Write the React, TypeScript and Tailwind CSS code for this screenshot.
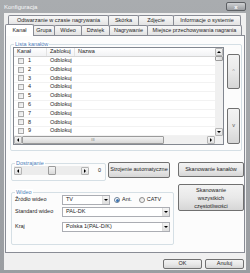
import React from 'react'

const tabBase =
  'flex items-center justify-center border border-b-0 border-[#898c95] rounded-t-[2px] whitespace-nowrap'

function Tab({ w, label, selected }: { w: string; label: string; selected?: boolean }) {
  if (selected) {
    return (
      <div className={`${tabBase} ${w} h-[12px] -mb-[1px] relative z-10 bg-white`}>{label}</div>
    )
  }
  return (
    <div className={`${tabBase} ${w} h-[10px] -ml-[1px] bg-gradient-to-b from-[#f8f8f8] to-[#e3e3e3]`}>
      {label}
    </div>
  )
}

function Btn({ className, children }: { className: string; children: React.ReactNode }) {
  return (
    <div
      className={`${className} flex items-center justify-center text-center border border-[#707070] rounded-[2px] bg-gradient-to-b from-[#f3f3f3] via-[#e9e9e9] to-[#d6d6d6] shrink-0`}
    >
      {children}
    </div>
  )
}

function Combo({ w, value }: { w: string; value: string }) {
  return (
    <div className={`${w} h-[10px] flex border border-[#abadb3] bg-white shrink-0`}>
      <span className="flex-1 pl-[3px] flex items-center">{value}</span>
      <div className="w-[7px] border-l border-[#dcdcdc] bg-gradient-to-b from-[#f4f4f4] to-[#dedede] flex items-center justify-center">
        <div className="w-0 h-0 border-x-[2px] border-x-transparent border-t-[2px] border-t-black" />
      </div>
    </div>
  )
}

function GroupLabel({ text }: { text: string }) {
  return (
    <div className="h-0 flex">
      <span className="-mt-[4px] ml-[3px] px-[1px] bg-white h-[7px] leading-[7px] text-[#4f7fb9]">{text}</span>
    </div>
  )
}

function Arrow({ dir }: { dir: 'up' | 'down' | 'left' | 'right' }) {
  const cls =
    dir === 'up'
      ? 'border-x-[2px] border-x-transparent border-b-[2px] border-b-black'
      : dir === 'down'
        ? 'border-x-[2px] border-x-transparent border-t-[2px] border-t-black'
        : dir === 'left'
          ? 'border-y-[2px] border-y-transparent border-r-[2px] border-r-black'
          : 'border-y-[2px] border-y-transparent border-l-[2px] border-l-black'
  return (
    <div className="w-[8px] h-[8px] border border-[#b5b5b5] rounded-[1px] bg-gradient-to-b from-[#f5f5f5] to-[#e0e0e0] flex items-center justify-center shrink-0">
      <div className={`w-0 h-0 ${cls}`} />
    </div>
  )
}

const rows = [1, 2, 3, 4, 5, 6, 7, 8, 9]

export default function App() {
  return (
    <div className="w-[250px] h-[273px] flex flex-col bg-gradient-to-b from-[#a9acaf] to-[#9a9da1] font-['Liberation_Sans',sans-serif] text-[5.5px] leading-none text-[#1e1e1e] overflow-hidden">
      {/* Title bar */}
      <div className="h-[13px] flex items-center justify-between px-[4px] shrink-0">
        <span className="text-[6px] text-[#f7f7f7]">Konfiguracja</span>
        <div className="w-[20px] h-[9px] rounded-[2px] border border-[#5d6064] bg-gradient-to-b from-[#cfd1d3] to-[#9b9ea2] flex items-center justify-center text-white text-[6px] font-bold">
          x
        </div>
      </div>

      <div className="flex-1 mx-[4px] mb-[3px] bg-[#f0f0f0] flex flex-col">
        {/* Tabs back row */}
        <div className="mt-[2px] h-[10px] pl-[5px] flex shrink-0">
          <Tab w="w-[101px]" label="Odtwarzanie w czasie nagrywania" />
          <Tab w="w-[31px]" label="Skórka" />
          <Tab w="w-[36px]" label="Zdjęcie" />
          <Tab w="w-[68px]" label="Informacje o systemie" />
        </div>
        {/* Tabs front row */}
        <div className="h-[10px] pl-[1px] flex items-end shrink-0">
          <Tab w="w-[29px]" label="Kanał" selected />
          <Tab w="w-[22px]" label="Grupa" />
          <Tab w="w-[28px]" label="Wideo" />
          <Tab w="w-[29px]" label="Dźwięk" />
          <Tab w="w-[39px]" label="Nagrywanie" />
          <Tab w="w-[95px]" label="Miejsce przechowywania nagrania" />
        </div>

        {/* Panel */}
        <div className="ml-[1px] w-[240px] h-[218px] border border-[#898c95] bg-[#fcfcfc] flex flex-col shrink-0">
          {/* Lista kanałów */}
          <div className="mt-[8px] pl-[4px] flex">
            <div className="w-[232px] h-[107px] border border-[#d5dfe5] rounded-[2px] flex flex-col">
              <GroupLabel text="Lista kanałów" />
              <div className="pt-[2px] pl-[2px] flex">
                <div className="w-[211px] h-[98px] border border-[#828790] bg-white flex flex-col">
                  <div className="h-[88px] flex">
                    <div className="w-[201px] flex flex-col">
                      <div className="h-[9px] flex bg-gradient-to-b from-white to-[#f1f2f4] border-b border-[#d5d5d5]">
                        <div className="w-[33px] border-r border-[#e3e3e3] pl-[3px] flex items-center">Kanał</div>
                        <div className="w-[28px] border-r border-[#e3e3e3] pl-[3px] flex items-center">Zablokuj</div>
                        <div className="flex-1 pl-[3px] flex items-center">Nazwa</div>
                      </div>
                      {rows.map((n) => (
                        <div key={n} className="h-[8.8px] flex items-center border-b border-[#f2f2f2]">
                          <div className="w-[33px] flex items-center">
                            <div className="ml-[4px] w-[6px] h-[6px] border border-[#a9a9a9] bg-gradient-to-br from-[#e2e2e2] to-[#fafafa]" />
                            <span className="ml-[4px]">{n}</span>
                          </div>
                          <div className="w-[28px] pl-[3px]">Odblokuj</div>
                        </div>
                      ))}
                    </div>
                    <div className="w-[8px] bg-[#f0f0f0] flex flex-col">
                      <Arrow dir="up" />
                      <div className="h-[5px] border border-[#9b9b9b] rounded-[1px] bg-gradient-to-r from-[#f2f2f2] to-[#d9d9d9]" />
                      <div className="flex-1" />
                      <Arrow dir="down" />
                    </div>
                  </div>
                  <div className="h-[8px] flex bg-[#f0f0f0]">
                    <Arrow dir="left" />
                    <div className="w-[142px] border border-[#9b9b9b] rounded-[1px] bg-gradient-to-b from-[#f2f2f2] to-[#d9d9d9] flex items-center justify-center text-[4px] text-[#777]">
                      III
                    </div>
                    <div className="flex-1" />
                    <Arrow dir="right" />
                    <div className="w-[8px]" />
                  </div>
                </div>
                <div className="ml-[3px] mt-[7px] w-[13px] flex flex-col">
                  <Btn className="h-[35px] w-[13px] text-[#9a9a9a]">^</Btn>
                  <div className="h-[19px]" />
                  <Btn className="h-[36px] w-[13px] text-[#555]">v</Btn>
                </div>
              </div>
            </div>
          </div>

          {/* Dostrajanie row */}
          <div className="mt-[11px] pl-[5px] flex items-start">
            <div className="mt-[1px] w-[95px] h-[18px] border border-[#d5dfe5] rounded-[2px] flex flex-col">
              <GroupLabel text="Dostrajanie" />
              <div className="pt-[2px] pl-[2px] flex items-center">
                <div className="w-[75px] h-[9px] flex items-center bg-[#ececec]">
                  <Arrow dir="left" />
                  <div className="ml-[26px] w-[8px] h-[9px] border border-[#9b9b9b] rounded-[1px] bg-gradient-to-b from-[#f4f4f4] to-[#d9d9d9]" />
                  <div className="flex-1" />
                  <Arrow dir="right" />
                </div>
                <span className="ml-[9px]">0</span>
              </div>
            </div>
            <Btn className="ml-[2px] w-[62px] h-[16px] whitespace-nowrap">Strojenie automatyczne</Btn>
            <Btn className="ml-[8px] w-[66px] h-[15px]">Skanowanie kanałów</Btn>
          </div>

          {/* Wideo row */}
          <div className="mt-[3px] pl-[5px] flex items-start">
            <div className="mt-[8px] w-[163px] h-[53px] border border-[#d5dfe5] rounded-[2px] flex flex-col">
              <GroupLabel text="Wideo" />
              <div className="pt-[2px] pl-[3px] flex items-center">
                <span className="w-[47px]">Źródło wideo</span>
                <Combo w="w-[48px]" value="TV" />
                <div className="ml-[4px] w-[6px] h-[6px] rounded-full border border-[#6b7f95] bg-white flex items-center justify-center">
                  <div className="w-[3px] h-[3px] rounded-full bg-[#3b73b3]" />
                </div>
                <span className="ml-[2px]">Ant.</span>
                <div className="ml-[7px] w-[6px] h-[6px] rounded-full border border-[#8c8c8c] bg-gradient-to-br from-[#e0e0e0] to-white" />
                <span className="ml-[2px]">CATV</span>
              </div>
              <div className="pt-[2px] pl-[3px] flex items-center">
                <span className="w-[47px]">Standard wideo</span>
                <Combo w="w-[108px]" value="PAL-DK" />
              </div>
              <div className="pt-[5px] pl-[3px] flex items-center">
                <span className="w-[47px]">Kraj</span>
                <Combo w="w-[108px]" value="Polska 1(PAL-D/K)" />
              </div>
            </div>
            <Btn className="ml-[4px] w-[66px] h-[27px] flex-col leading-[8px]">
              <span>Skanowanie</span>
              <span>wszystkich</span>
              <span>częstotliwości</span>
            </Btn>
          </div>
        </div>

        {/* Bottom buttons */}
        <div className="mt-[6px] h-[10px] flex justify-end gap-[3px] pr-[2px] shrink-0">
          <Btn className="w-[39px] h-[10px]">OK</Btn>
          <Btn className="w-[39px] h-[10px]">Anuluj</Btn>
        </div>
      </div>
    </div>
  )
}
